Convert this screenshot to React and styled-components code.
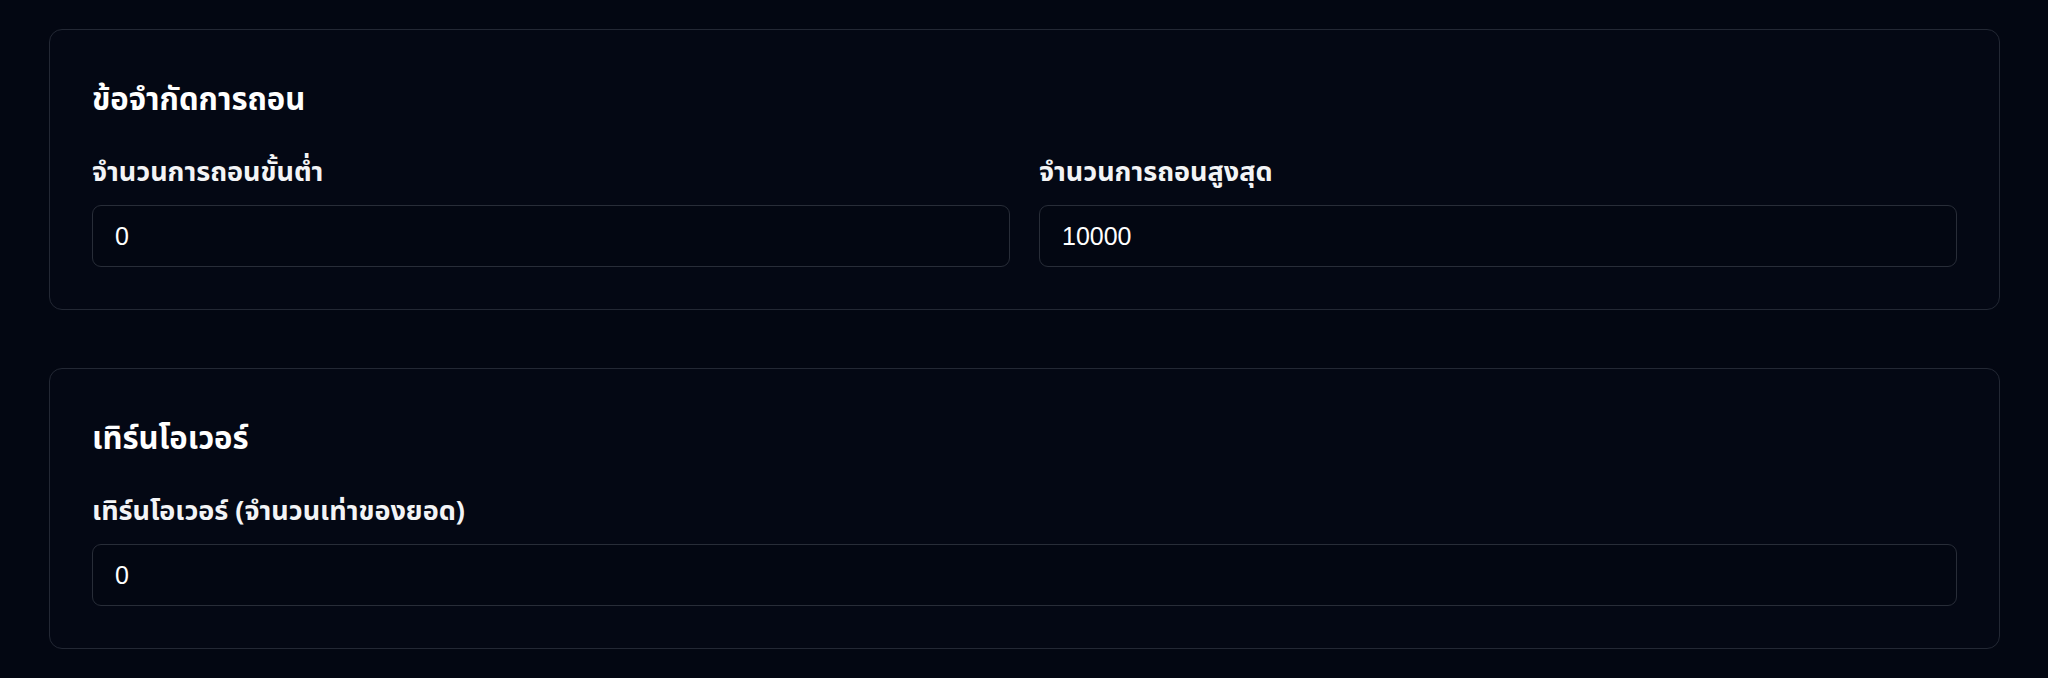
import React from "react";
import styled, { createGlobalStyle } from "styled-components";

const Global = createGlobalStyle`
  html, body { margin: 0; padding: 0; background: #030712; }
  body { font-family: "Noto Sans", "Noto Sans Thai", "Noto Sans Thai Looped", "Liberation Sans", sans-serif; color: #f9fafb; }
  * { box-sizing: border-box; }
`;

const Page = styled.main`
  display: flex;
  flex-direction: column;
  gap: 58px;
  padding: 29px 48px 30px 49px;
  min-height: 678px;
  background: #030712;
`;

const Card = styled.section`
  border: 1.5px solid #232834;
  border-radius: 13px;
  background: #040814;
  padding: 42px 42px 42px;
  display: flex;
  flex-direction: column;
`;

const Title = styled.h2`
  margin: 0 0 29px;
  font-size: 31px;
  font-weight: 700;
  line-height: 52px;
  color: #ffffff;
`;

const Grid = styled.div`
  display: grid;
  grid-template-columns: ${(p) => `repeat(${p.cols}, 1fr)`};
  column-gap: 29px;
`;

const Field = styled.div`
  display: flex;
  flex-direction: column;
  gap: 16px;
`;

const Label = styled.label`
  font-size: 27px;
  font-weight: 700;
  line-height: 36px;
  color: #f3f4f6;
`;

const Input = styled.input`
  height: 62px;
  width: 100%;
  border: 1.5px solid #282d38;
  border-radius: 9px;
  background: #030712;
  color: #ffffff;
  padding: 0 22px;
  font-family: "Liberation Sans", Arial, sans-serif;
  font-size: 25px;
  outline: none;
`;

export default function App() {
  return (
    <>
      <Global />
      <Page>
        <Card>
          <Title>ข้อจำกัดการถอน</Title>
          <Grid cols={2}>
            <Field>
              <Label>จำนวนการถอนขั้นต่ำ</Label>
              <Input defaultValue="0" />
            </Field>
            <Field>
              <Label>จำนวนการถอนสูงสุด</Label>
              <Input defaultValue="10000" />
            </Field>
          </Grid>
        </Card>
        <Card>
          <Title>เทิร์นโอเวอร์</Title>
          <Grid cols={1}>
            <Field>
              <Label>เทิร์นโอเวอร์ (จำนวนเท่าของยอด)</Label>
              <Input defaultValue="0" />
            </Field>
          </Grid>
        </Card>
      </Page>
    </>
  );
}
